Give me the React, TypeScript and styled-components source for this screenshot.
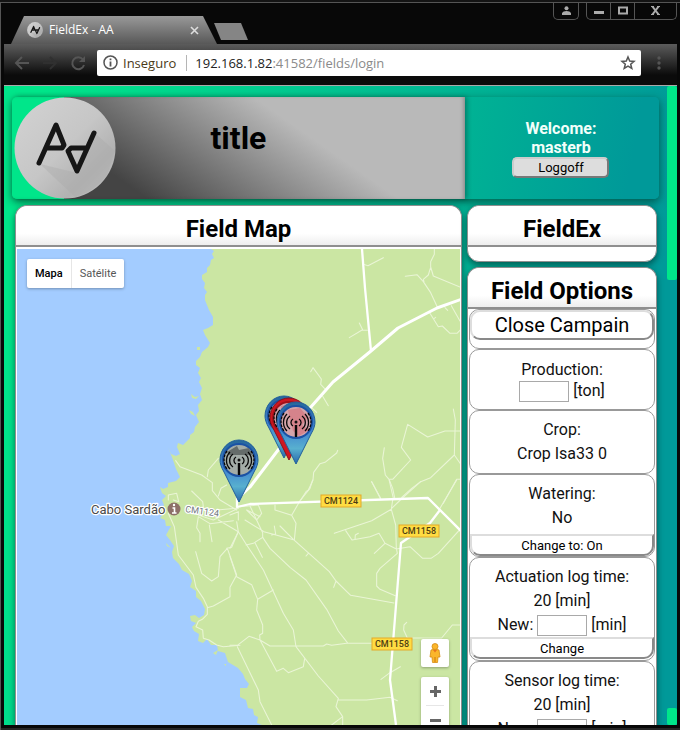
import React from "react";
import styled, { createGlobalStyle } from "styled-components";

const GlobalStyle = createGlobalStyle`
  *, *::before, *::after { box-sizing: border-box; }
  body { margin: 0; background: #080808; font-family: Roboto, "Liberation Sans", sans-serif; }
  h1, h2, p { margin: 0; }
  button { font-family: inherit; padding: 0; color: #000; }
`;

const GREEN = "#00e68a";
const TEAL = "#009999";

/* Browser window */

const BrowserWindow = styled.div`
  display: flex;
  flex-direction: column;
  height: 100vh;
  padding: 0 3px 5px 4px;
  background: #080808;
  border-top: 2px solid #141414;
  box-shadow: inset 1px 1px 0 #555, inset 0 -2px 0 #262626;
  overflow: hidden;
`;

const TitleBar = styled.header`
  display: flex;
  align-items: flex-end;
  height: 42px;
  flex: none;
  padding-left: 7px;
`;

const Tab = styled.div`
  display: flex;
  align-items: center;
  width: 206px;
  height: 28px;
  padding: 0 18px 0 16px;
  gap: 6px;
  color: #fff;
  font: 12px/28px "Open Sans", sans-serif;
  background: linear-gradient(#999, #585858);
  clip-path: polygon(13px 0, 192px 0, 100% 100%, 0 100%);
`;

const TabTitle = styled.span`
  flex: 1;
  white-space: nowrap;
`;

const TabClose = styled.button`
  display: flex;
  border: 0;
  background: none;
`;

const NewTab = styled.button`
  width: 34px;
  height: 17px;
  margin: 0 0 4px -3px;
  border: 0;
  background: #858585;
  clip-path: polygon(0 0, 27px 0, 100% 100%, 7px 100%);
`;

const WindowButtons = styled.div`
  display: flex;
  align-self: flex-start;
  gap: 7px;
  margin-left: auto;
`;

const ButtonGroup = styled.div`
  display: flex;
  height: 18px;
  border: 1px solid #555;
  border-top: 0;
  border-radius: 0 0 5px 5px;
`;

const WindowButton = styled.button<{ $wide?: boolean }>`
  display: grid;
  place-items: center;
  width: ${(p) => (p.$wide ? 41 : 24)}px;
  border: 0;
  border-right: 1px solid #555;
  background: none;
  &:last-child { border-right: 0; }
`;

const Toolbar = styled.nav`
  display: flex;
  align-items: center;
  flex: none;
  height: 42px;
  padding: 0 16px 4px 9px;
  background: linear-gradient(#5c5c5c, #0b0b0b 31px);
  border-bottom: 1px solid #aaa;
`;

const NavButton = styled.button`
  display: flex;
  width: 28px;
  border: 0;
  background: none;
`;

const AddressBar = styled.form`
  display: flex;
  align-items: center;
  flex: 1;
  height: 26px;
  padding: 0 5px 0 6px;
  border-radius: 2px;
  background: #fff;
  color: #8a8a8a;
  font: 13px/26px "Open Sans", sans-serif;
  white-space: nowrap;
`;

const Security = styled.span`
  margin-left: 5px;
  padding-right: 10px;
  color: #4a3a18;
  line-height: 16px;
  border-right: 1px solid #b5b5b5;
`;

const Address = styled.span`
  flex: 1;
  margin-left: 8px;
`;

const Host = styled.span`
  color: #222;
`;

const IconButton = styled.button`
  display: flex;
  border: 0;
  background: none;
`;

const MenuButton = styled(IconButton)`
  margin-left: 16px;
`;

/* Page */

const Viewport = styled.div`
  display: flex;
  flex: 1;
  min-height: 0;
  background: linear-gradient(100deg, ${GREEN} 5%, ${TEAL} 88%);
`;

const Page = styled.main`
  display: flex;
  flex-direction: column;
  flex: 1;
  min-width: 0;
  padding: 11px 8px 0;
  gap: 6px;
  overflow: hidden;
`;

const ScrollTrack = styled.div`
  display: flex;
  flex-direction: column;
  justify-content: space-between;
  width: 10px;
  flex: none;
  background: ${TEAL};
`;

const ScrollThumb = styled.div<{ $size: number }>`
  height: ${(p) => p.$size}px;
  background: ${GREEN};
  border-radius: 2px;
`;

const Banner = styled.header`
  display: grid;
  grid-template-columns: 7fr 3fr;
  height: 102px;
  flex: none;
  border-radius: 5px;
  background: linear-gradient(100deg, ${GREEN} 15%, ${TEAL} 95%);
  box-shadow: 0 3px 8px rgba(0, 40, 30, 0.6);
`;

const TitlePanel = styled.div`
  display: grid;
  grid-template-columns: 104px 1fr 104px;
  background: linear-gradient(35deg, #444 14%, #b9b9b9 56%) 52px 0 no-repeat;
  box-shadow: 2px 0 5px rgba(0, 0, 0, 0.3), inset -3px 0 4px -2px rgba(0, 0, 0, 0.3);
  border-radius: 5px 0 0 5px;
`;

const LogoBox = styled.div`
  padding-left: 2px;
  svg { display: block; }
`;

const PageTitle = styled.h1`
  font-size: 32px;
  line-height: 40px;
  padding-top: 21px;
  text-align: center;
`;

const UserPanel = styled.div`
  display: flex;
  flex-direction: column;
  align-items: center;
  justify-content: center;
  padding-right: 2px;
  color: #f2fffa;
  font-weight: 700;
  font-size: 16px;
  line-height: 19px;
  text-align: center;
`;

const LogoffButton = styled.button`
  width: 97px;
  height: 21px;
  border: 2px outset #ccc;
  border-radius: 5px;
  background: #ddd;
  font-size: 13px;
  line-height: 17px;
`;

const Columns = styled.div`
  display: grid;
  grid-template-columns: 1fr 190px;
  gap: 5px;
  flex: 1;
  min-height: 0;
  padding: 0 2px 0 3px;
`;

const SideColumn = styled.aside`
  display: flex;
  flex-direction: column;
  gap: 5px;
  min-height: 0;
`;

const Panel = styled.section<{ $round?: boolean }>`
  display: flex;
  flex-direction: column;
  min-width: 0;
  min-height: 0;
  flex: none;
  border: 1px solid #8f8f8f;
  border-radius: ${(p) => (p.$round ? "12px" : "12px 12px 0 0")};
  border-bottom-width: ${(p) => (p.$round ? 1 : 0)}px;
  background: #fff;
  box-shadow: 0 3px 6px rgba(0, 40, 40, 0.6);
`;

const PanelTitle = styled.h2`
  flex: none;
  height: 41px;
  padding-top: 8px;
  font-size: 24px;
  line-height: 30px;
  text-align: center;
  border-bottom: 2px solid #8f8f8f;
  border-radius: 12px 12px 0 0;
  background: linear-gradient(#fff 70%, #eee);
`;

const PanelFoot = styled.div`
  height: 14px;
`;

/* Map */

const MapFrame = styled.div`
  position: relative;
  flex: 1;
  min-height: 0;
  margin: 2px 1px 0;
  overflow: hidden;
  background: #a3ccff;
`;

const MapDrawing = styled.svg`
  position: absolute;
  inset: 0;
  width: 100%;
  height: 100%;
`;

const MapControl = styled.div`
  position: absolute;
  display: flex;
  background: #fff;
  border-radius: 2px;
  box-shadow: 0 1px 3px rgba(0, 0, 0, 0.3);
`;

const MapTypes = styled(MapControl)`
  top: 10px;
  left: 10px;
  height: 29px;
`;

const MapType = styled.button<{ $active?: boolean }>`
  padding: 0 8px;
  border: 0;
  border-right: ${(p) => (p.$active ? "1px solid #e6e6e6" : "0")};
  background: none;
  font-size: 11px;
  font-weight: ${(p) => (p.$active ? 500 : 400)};
  color: ${(p) => (p.$active ? "#000" : "#565656")};
`;

const StreetView = styled(MapControl)`
  right: 11px;
  bottom: 58px;
`;

const ZoomControl = styled(MapControl)`
  right: 11px;
  bottom: -9px;
  flex-direction: column;
`;

const SquareButton = styled.button`
  display: grid;
  place-items: center;
  width: 28px;
  height: 28px;
  border: 0;
  background: none;
`;

const ZoomLine = styled.div`
  height: 1px;
  margin: 0 5px;
  background: #e6e6e6;
`;

/* Options */

const OptionsList = styled.div`
  display: flex;
  flex-direction: column;
  padding: 0 1px;
`;

const Option = styled.div<{ $top?: number; $bottom?: number }>`
  display: flex;
  flex-direction: column;
  flex: none;
  padding: ${(p) => p.$top ?? 7}px 0 ${(p) => p.$bottom ?? 0}px;
  border: 1px solid #999;
  border-radius: 10px;
  font-size: 16px;
  line-height: 24px;
  text-align: center;
  color: #111;
`;

const Line = styled.p`
  white-space: nowrap;
`;

const FieldLine = styled.label<{ $tight?: boolean }>`
  display: flex;
  align-items: center;
  justify-content: center;
  gap: 4px;
  height: ${(p) => (p.$tight ? 18 : 24)}px;
  line-height: 20px;
`;

const NumberBox = styled.input`
  width: 50px;
  height: 21px;
  border: 1px solid #a9a9a9;
  background: #fff;
`;

const OptionButton = styled.button<{ $large?: boolean; $gap?: number }>`
  height: ${(p) => (p.$large ? 30 : 22)}px;
  margin-top: ${(p) => p.$gap ?? 0}px;
  border: 2px outset #ddd;
  border-radius: ${(p) => (p.$large ? "10px" : "0 0 10px 10px")};
  background: #fff;
  font-size: ${(p) => (p.$large ? 20 : 13)}px;
  line-height: ${(p) => (p.$large ? 24 : 17)}px;
`;

const LETTERS = "M38 66 L55 28 L63 48 L61 51 H47 M93 36 L76 74 L67 54 L70 51 H86";

function Logo({ size }: { size: number }) {
  return (
    <svg width={size} height={size} viewBox="13 0 102 102" aria-label="AA">
      <defs>
        <linearGradient id={`disc${size}`} x1="0" y1="0" x2="1" y2="1">
          <stop offset="0" stopColor="#d3d3d3" />
          <stop offset="0.5" stopColor="#c6c6c6" />
          <stop offset="0.75" stopColor="#b2b2b2" />
          <stop offset="1" stopColor="#c4c4c4" />
        </linearGradient>
      </defs>
      <circle cx="64" cy="51" r="50.5" fill={`url(#disc${size})`} />
      <path d="M39 67 L74 100 Q95 94 106 78 L114 54 L95 37 L76 76Z" fill="#aaa" opacity="0.4" />
      <path d={LETTERS} fill="none" stroke="#161616" strokeWidth={size < 30 ? 8 : 5} strokeLinecap="round" strokeLinejoin="round" />
    </svg>
  );
}

function Pin({ x, y, red, rosy }: { x: number; y: number; red?: boolean; rosy?: boolean }) {
  return (
    <g transform={`translate(${x} ${y})`}>
      <path
        d="M0 42 L-15 12 C-18 7 -19 3 -19 0 A19 20 0 0 1 19 0 C19 3 18 7 15 12 Z"
        fill={red ? "#cf1620" : "url(#pinBlue)"}
        stroke={red ? "#8e1018" : "#215f9c"}
      />
      <circle r="16" fill={rosy ? "#d4a4aa" : "#a3aca7"} stroke={red ? "#a3121a" : "#1b52a4"} strokeWidth="2" />
      {rosy ? (
        <path d="M-8 -12 L4 -14 L12 -5 L6 3 L13 8 L3 14 L-3 9Z" fill="#d5626c" opacity="0.5" />
      ) : (
        <path d="M-12 -8 L-2 -14 L0 -10 L10 -12 L13 -5 H-10Z" fill="#656c6a" />
      )}
      <g fill="none" stroke="#080808" strokeWidth="1.3">
        <path d="M-3 -3 A4 4 0 0 0 -3 4 M3 -3 A4 4 0 0 1 3 4" />
        <path d="M-6 -6 A8 8 0 0 0 -6 7 M6 -6 A8 8 0 0 1 6 7" />
        <path d="M-9 -8 A12 12 0 0 0 -9 9 M9 -8 A12 12 0 0 1 9 9" />
        <path d="M-12 -9 A15 15 0 0 0 -12 9 M12 -9 A15 15 0 0 1 12 9" strokeDasharray="3 1" />
        <path d="M0 3 V15" strokeWidth="2.4" />
      </g>
      <circle r="1.5" fill="#111" />
    </g>
  );
}

function RoadSign({ x, y, name }: { x: number; y: number; name: string }) {
  return (
    <g transform={`translate(${x} ${y})`}>
      <rect x="-20" y="-6" width="40" height="12" fill="#ffdc42" stroke="#e3a92a" />
      <text y="3" textAnchor="middle" fontSize="9" fontWeight="500" fill="#4c3d12">{name}</text>
    </g>
  );
}

const COAST =
  "M211 249 l3 2 l-2 3 l2 4 l-3 2 l-1 5 l-3 3 l0 4 l-5 3 l0 4 l3 4 l-1 5 l3 4 l-2 3 l0 5 L209 310 L213 317 L213 325 L208 328 L203 330 L205 335 L210 343 L208 347 L202 352 L200 357 L196 361 L196 365 L200 368 L198 373 L201 378 L199 382 L202 388 L200 394 L202 400 L198 405 L199 411 L196 415 L199 422 L195 427 L194 432 L190 435 L190 438 L183 445 L178 443 L177 447 L180 454 L176 456 L171 454 L168 447 L173 460 L176 469 L180 477 L176 481 L168 483 L168 487 L163 489 L160 487 L162 493 L166 496 L162 500 L164 505 L160 510 L163 514 L160 518 L165 520 L166 526 L171 526 L166 535 L170 540 L174 546 L172 552 L173 558 L179 564 L182 570 L189 574 L192 581 L190 587 L196 591 L196 597 L201 601 L205 609 L204 615 L199 618 L195 615 L190 616 L191 621 L196 623 L192 627 L194 631 L199 634 L198 641 L203 643 L207 639 L211 645 L217 645 L218 651 L225 653 L228 662 L238 668 L243 674 L245 679 L249 684 L247 688 L240 688 L240 697 L246 700 L248 708 L253 709 L254 715 L258 717 L257 723 L262 725 H900 V249Z";

function FieldMapDrawing() {
  return (
    <MapDrawing viewBox="17 249 443 476" preserveAspectRatio="xMinYMin slice" role="img" aria-label="Cabo Sardão">
      <defs>
        <linearGradient id="pinBlue" x1="0" y1="0" x2="0" y2="1">
          <stop offset="0" stopColor="#26689a" />
          <stop offset="0.45" stopColor="#3f82d0" />
          <stop offset="0.75" stopColor="#58b0cf" />
          <stop offset="1" stopColor="#2767ab" />
        </linearGradient>
      </defs>
      <path d={COAST} fill="#cbe6a3" />
      <g fill="#cbe6a3">
        <path d="M191 394 l4 3 l4 -1 l-3 3 l-4 -1Z M189 410 l4 2 l2 4 l-4 -2Z M197 347 h3 v3 h-3Z M166 543 l5 5 l-4 -2Z M213 653 l5 -3 l-2 5Z M224 664 h2 v2Z" />
      </g>
      <g fill="none" stroke="#eaf5d6" strokeWidth="3.2" strokeLinejoin="round" strokeLinecap="round">
        <g transform="translate(300 245) scale(0.33333)">
          <path d="M190 58 L204 62 L250 38 M403 12 V28 L392 50 L392 66 L400 93 L480 126 M391 70 L385 90 L370 103 L372 110 M316 94 L351 89 L370 110 L392 143 L412 186 M454 182 L480 228 M388 202 L415 245 L427 243 L450 265 L471 265 L484 252 M403 220 L407 217 M435 188 L443 196" />
          <path d="M148 278 L185 256 H202 M178 234 L188 254 M32 380 L39 368 L64 402 L62 418 L77 434 M68 454 L85 482 M35 488 L50 502" />
          <path d="M460 492 L466 525 L463 630 L484 660 M482 558 H435 L383 576 L323 538 L304 607 L332 645 L278 703 L267 703 L256 690 L248 640 L253 608 M267 703 L281 764 M215 710 L242 762 M463 630 L392 698 L362 710 L304 762 L275 790 M484 703 H470 L430 775 M113 616 L110 624 L75 652 L60 656 L41 682 L39 705 L25 735 L18 740 L2 766" />
        </g>
        <g transform="translate(230 480) scale(0.33333)">
          <path d="M425 5 L452 55 M478 0 L488 25 L495 58 M572 5 L545 25 L515 52 M680 0 L630 85 M488 60 L484 88 L497 135 L499 205 L502 220 L450 265 L440 280 L440 318 L450 328 L496 347 M484 88 L425 122 L313 160 M347 152 L366 180 L420 170 L447 160 L465 190 L433 220 M465 190 L499 207 L540 200 L578 235 L603 235 L625 220 L690 148 M375 178 L376 165 L385 160" />
          <path d="M60 78 L98 158 L98 172 L120 205 L180 262 L228 300 L290 388 L325 453 L352 488 M150 138 L190 178 L298 275 L318 303 L362 346 L492 369 M318 303 L311 322 M228 228 L235 220 M135 75 L135 90 L185 106 L198 130 L193 180 L102 155 L45 120 M185 106 L210 62 L240 25 L248 0 M133 138 L137 162 L125 165" />
          <path d="M20 125 L25 155 L50 195 L100 270 L160 400 L190 450 L198 500 L265 588 L325 655 L318 680 L338 710 L338 735 M325 660 H410 L480 652 L502 662 M338 710 L305 735 M48 195 L70 190 L98 172 M75 188 L97 232 M25 155 L0 205 M0 230 L20 290 L65 314 L83 358 L130 330 M83 358 L80 390 L98 435 L98 460 L89 465 L90 480 L120 498 H280 L290 492 L305 496 L350 490 H490 M90 480 L57 469 L22 496 H0 M90 480 L140 574 L160 565 L175 578 L220 560 L224 536 M22 500 L85 630 L90 665 L125 735 M530 427 L522 435 L521 450 L532 474 H635 L667 435 H690 M453 598 L480 578 L511 560" />
        </g>
        <g transform="translate(0 300) scale(0.33333)">
          <path d="M527 482 L540 500 L605 525 L637 548 L637 572 L660 600 L710 630 M622 530 L625 510 L655 475 M655 588 L663 565 L680 555 M575 573 L608 605 L610 620 M505 600 L505 585 L530 580 L536 605 L520 600 M505 640 L523 680 L535 765 L580 825 L588 862 L610 895 L622 920 V943 L607 958 L595 964 L588 980 L608 990 L610 1015 L627 1020 L650 1035 L670 1040 L720 1036 M622 923 L640 918 L690 890 L690 862 L710 825 L682 745 L660 770 L655 830 L635 843 L605 820 L587 755 M680 745 L695 742 L715 695 L655 660 M600 725 V700 L590 683 L595 650 L630 671 L700 662 M628 675 L636 725 M595 645 L640 660 L715 625 M650 630 L710 625" />
          <path d="M690 645 L715 635 V660 M720 620 L775 615 L785 640 L770 660 L740 630 L780 650" />
        </g>
      </g>
      <g fill="none" stroke="#fff" strokeWidth="2.3" strokeLinejoin="round">
        <path d="M362 249 L365 288 L371 351" />
        <path d="M237 499 L250 487 L310 408 L333 382 L371 351 L398 328 L437 308 L462 299" strokeWidth="3" />
        <path d="M237 497 V507 L250 504 L428 498 L462 532" />
        <path d="M440 510 L430 523 L401 543 L390 680 L396 725" />
      </g>
      <RoadSign x={341} y={501} name="CM1124" />
      <RoadSign x={419} y={531} name="CM1158" />
      <RoadSign x={392} y={644} name="CM1158" />
      <g stroke="#fff" strokeWidth="2.5" paintOrder="stroke" strokeLinejoin="round">
        <text x="91" y="514" fontSize="13" fill="#4a4a4a">Cabo Sardão</text>
        <text fontSize="9" fill="#72777f" transform="translate(185 512) rotate(8)">CM1124</text>
      </g>
      <circle cx="174" cy="509" r="6.5" fill="#8d7068" />
      <path d="M172.500 508 h2 v5 M172 513 h4.500" fill="none" stroke="#fff" strokeWidth="1.600" />
      <circle cx="174" cy="505" r="1.200" fill="#fff" />
      <Pin x={239} y={460} />
      <Pin x={284} y={416} />
      <Pin x={289} y={418} red rosy />
      <Pin x={296} y={422} rosy />
    </MapDrawing>
  );
}

function Sign({ plus }: { plus?: boolean }) {
  return (
    <svg width="11" height="11" viewBox="0 0 11 11">
      <path d={plus ? "M0 5.500 H11 M5.500 0 V11" : "M0 5.500 H11"} stroke="#666" strokeWidth="3" />
    </svg>
  );
}

export default function App() {
  return (
    <BrowserWindow>
      <GlobalStyle />
      <TitleBar>
        <Tab>
          <Logo size={16} />
          <TabTitle>FieldEx - AA</TabTitle>
          <TabClose aria-label="Close tab">
            <svg width="9" height="9" viewBox="0 0 9 9"><path d="M1 1 L8 8 M8 1 L1 8" stroke="#ddd" strokeWidth="1.600" /></svg>
          </TabClose>
        </Tab>
        <NewTab aria-label="New tab" />
        <WindowButtons>
          <ButtonGroup>
            <WindowButton aria-label="User">
              <svg width="9" height="9" viewBox="0 0 9 9" fill="#aaa"><circle cx="4.500" cy="2.200" r="2" /><path d="M0 9 V7 Q1 5 4.500 5 T9 7 V9Z" /></svg>
            </WindowButton>
          </ButtonGroup>
          <ButtonGroup>
            <WindowButton aria-label="Minimize">
              <svg width="10" height="9" viewBox="0 0 10 9"><path d="M0 6.500 H10" stroke="#aaa" strokeWidth="3" /></svg>
            </WindowButton>
            <WindowButton aria-label="Maximize">
              <svg width="10" height="9" viewBox="0 0 10 9"><rect x="1" y="1.500" width="8" height="6" fill="none" stroke="#aaa" strokeWidth="2" /></svg>
            </WindowButton>
            <WindowButton $wide aria-label="Close">
              <svg width="9" height="9" viewBox="0 0 9 9"><path d="M1 0 L8 9 M8 0 L1 9" stroke="#aaa" strokeWidth="2" /><path d="M0 .5 H3 M6 .5 H9 M0 8.500 H3 M6 8.500 H9" stroke="#aaa" /></svg>
            </WindowButton>
          </ButtonGroup>
        </WindowButtons>
      </TitleBar>
      <Toolbar>
        <NavButton aria-label="Back">
          <svg width="18" height="16" viewBox="0 0 18 16" fill="none" stroke="#555" strokeWidth="2"><path d="M16 8 H3 M9 2 L3 8 L9 14" /></svg>
        </NavButton>
        <NavButton aria-label="Forward">
          <svg width="18" height="16" viewBox="0 0 18 16" fill="none" stroke="#303030" strokeWidth="2"><path d="M2 8 H15 M9 2 L15 8 L9 14" /></svg>
        </NavButton>
        <NavButton aria-label="Reload">
          <svg width="18" height="16" viewBox="0 0 18 16"><path d="M14 4.500 A6 6 0 1 0 15 10" fill="none" stroke="#555" strokeWidth="2" /><path d="M16 1 V7 H10Z" fill="#555" /></svg>
        </NavButton>
        <AddressBar>
          <svg width="15" height="15" viewBox="0 0 15 15"><circle cx="7.500" cy="7.500" r="6.500" fill="none" stroke="#555" strokeWidth="1.500" /><path d="M7.500 6.500 V11.500 M7.500 3.500 V5.300" stroke="#555" strokeWidth="1.800" /></svg>
          <Security>Inseguro</Security>
          <Address><Host>192.168.1.82</Host>:41582/fields/login</Address>
          <IconButton type="button" aria-label="Bookmark">
            <svg width="16" height="16" viewBox="0 0 16 16"><path d="M8 2 L9.700 6.100 L14 6.400 L10.700 9.200 L11.800 13.500 L8 11.200 L4.200 13.500 L5.300 9.200 L2 6.400 L6.300 6.100Z" fill="none" stroke="#555" strokeWidth="1.500" /></svg>
          </IconButton>
        </AddressBar>
        <MenuButton aria-label="Menu">
          <svg width="4" height="14" viewBox="0 0 4 14" fill="#555"><circle cx="2" cy="2" r="1.700" /><circle cx="2" cy="7" r="1.700" /><circle cx="2" cy="12" r="1.700" /></svg>
        </MenuButton>
      </Toolbar>
      <Viewport>
        <Page>
          <Banner>
            <TitlePanel>
              <LogoBox><Logo size={102} /></LogoBox>
              <PageTitle>title</PageTitle>
            </TitlePanel>
            <UserPanel>
              <p>Welcome:</p>
              <p>masterb</p>
              <LogoffButton>Loggoff</LogoffButton>
            </UserPanel>
          </Banner>
          <Columns>
            <Panel>
              <PanelTitle>Field Map</PanelTitle>
              <MapFrame>
                <FieldMapDrawing />
                <MapTypes>
                  <MapType $active>Mapa</MapType>
                  <MapType>Satélite</MapType>
                </MapTypes>
                <StreetView>
                  <SquareButton aria-label="Street View">
                    <svg width="14" height="20" viewBox="0 0 14 20">
                      <path d="M3 7 Q7 5 11 7 L12 14 L10 14 L9.500 19.500 H4.500 L4 14 L2 14Z" fill="#fbb62b" stroke="#d48b14" strokeWidth="0.800" />
                      <path d="M7 14 V19" stroke="#c87912" />
                      <path d="M5 7 H9 L7 9.500Z" fill="#e8731f" />
                      <circle cx="7" cy="3.500" r="3" fill="#fbb62b" stroke="#d48b14" strokeWidth="0.800" />
                    </svg>
                  </SquareButton>
                </StreetView>
                <ZoomControl>
                  <SquareButton aria-label="Zoom in"><Sign plus /></SquareButton>
                  <ZoomLine />
                  <SquareButton aria-label="Zoom out"><Sign /></SquareButton>
                </ZoomControl>
              </MapFrame>
            </Panel>
            <SideColumn>
              <Panel $round>
                <PanelTitle>FieldEx</PanelTitle>
                <PanelFoot />
              </Panel>
              <Panel>
                <PanelTitle>Field Options</PanelTitle>
                <OptionsList>
                  <Option $top={0} $bottom={8}>
                    <OptionButton $large>Close Campain</OptionButton>
                  </Option>
                  <Option $top={8} $bottom={9}>
                    <Line>Production:</Line>
                    <FieldLine $tight><NumberBox aria-label="Production" />[ton]</FieldLine>
                  </Option>
                  <Option $bottom={7}>
                    <Line>Crop:</Line>
                    <Line>Crop Isa33 0</Line>
                  </Option>
                  <Option>
                    <Line>Watering:</Line>
                    <Line>No</Line>
                    <OptionButton $gap={4}>Change to: On</OptionButton>
                  </Option>
                  <Option $bottom={1}>
                    <Line>Actuation log time:</Line>
                    <Line>20 [min]</Line>
                    <FieldLine>New: <NumberBox />[min]</FieldLine>
                    <OptionButton>Change</OptionButton>
                  </Option>
                  <Option $bottom={1}>
                    <Line>Sensor log time:</Line>
                    <Line>20 [min]</Line>
                    <FieldLine>New: <NumberBox />[min]</FieldLine>
                    <OptionButton>Change</OptionButton>
                  </Option>
                </OptionsList>
              </Panel>
            </SideColumn>
          </Columns>
        </Page>
        <ScrollTrack>
          <ScrollThumb $size={194} />
          <ScrollThumb $size={17} />
        </ScrollTrack>
      </Viewport>
    </BrowserWindow>
  );
}
